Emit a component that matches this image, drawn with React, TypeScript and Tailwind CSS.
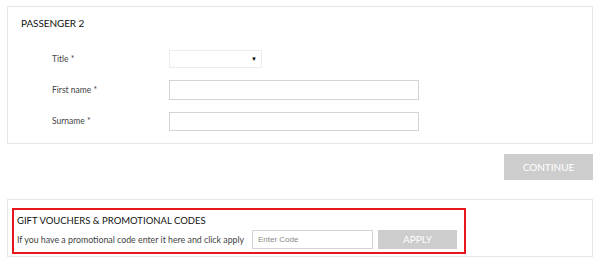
import React from "react";

export default function App() {
  const font = { fontFamily: "Lato, 'Open Sans', sans-serif" };
  return (
    <div className="w-[600px] h-[260px] bg-white pt-[6px] px-[7px] text-[#333]" style={font}>
      <div className="h-[138px] border border-[#e6e6e6] pl-[13px] pt-[10px]">
        <div className="text-[10px] leading-[12px] text-[#111] tracking-[-0.1px]">PASSENGER 2</div>
        <div className="mt-[21px] flex items-center h-[18px]">
          <div className="w-[148px] pl-[31px] text-[8.5px] text-[#444]">Title *</div>
          <div className="w-[93px] h-[18px] border border-[#ececec] flex items-center justify-end pr-[4px]">
            <span className="text-[6px] leading-none text-black">▼</span>
          </div>
        </div>
        <div className="mt-[12px] flex items-center h-[20px]">
          <div className="w-[148px] pl-[31px] text-[8.5px] text-[#444]">First name *</div>
          <div className="w-[250px] h-[20px] border border-[#d4d4d4]" />
        </div>
        <div className="mt-[12px] flex items-center h-[19px]">
          <div className="w-[148px] pl-[31px] text-[8.5px] text-[#444]">Surname *</div>
          <div className="w-[250px] h-[19px] border border-[#d4d4d4]" />
        </div>
      </div>
      <div className="flex justify-end mt-[10px]">
        <div className="w-[89px] h-[26px] bg-[#cdcdcd] text-white text-[10px] flex items-center justify-center">CONTINUE</div>
      </div>
      <div className="mt-[19px] h-[58px] border border-[#e6e6e6] pl-[4px] pt-[8px]">
        <div className="w-[454px] h-[46px] border-2 border-[#e8151d] pl-[3px] pt-[5px]">
          <div className="text-[9.5px] leading-[12px] text-[#111]">GIFT VOUCHERS &amp; PROMOTIONAL CODES</div>
          <div className="flex items-center mt-[3px]">
            <div className="w-[235px] text-[8.8px] text-[#444]">If you have a promotional code enter it here and click apply</div>
            <div className="w-[121px] h-[19px] border border-[#d4d4d4] flex items-center pl-[5px] text-[8px] text-[#888]" style={{ fontFamily: "'Liberation Sans', Arial, sans-serif" }}>Enter Code</div>
            <div className="ml-[5px] w-[79px] h-[19px] bg-[#cdcdcd] text-white text-[10px] flex items-center justify-center">APPLY</div>
          </div>
        </div>
      </div>
    </div>
  );
}
